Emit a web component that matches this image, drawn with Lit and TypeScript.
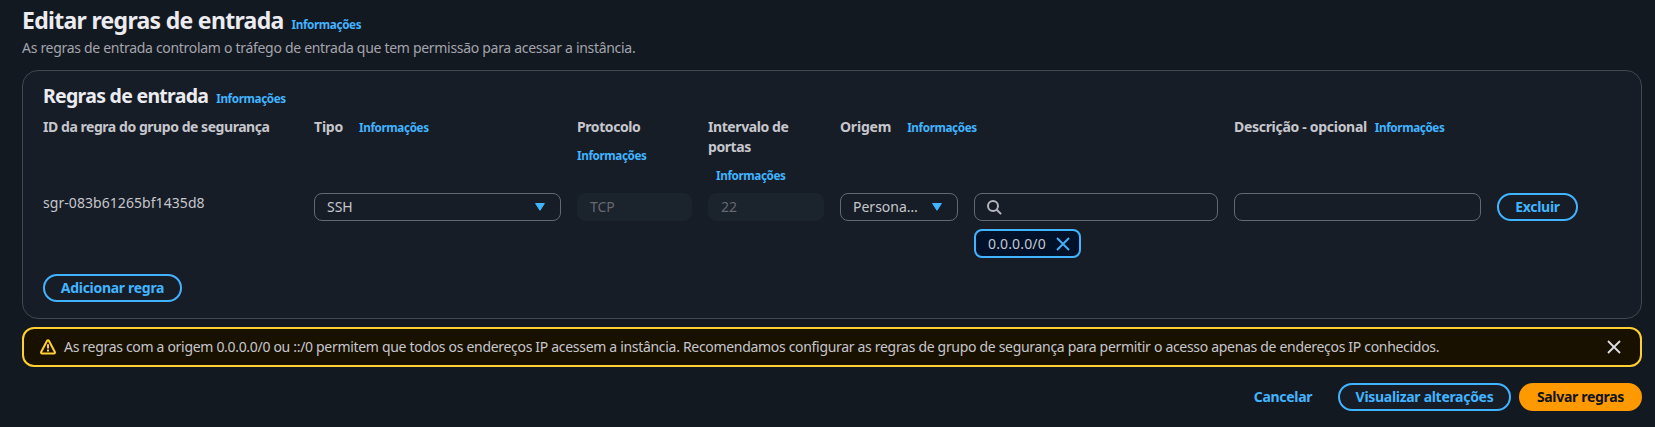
import { LitElement, html, css } from "lit";
import { customElement, property } from "lit/decorators.js";

@customElement("info-link")
class InfoLink extends LitElement {
  static styles = css`
    :host { display: inline-block; }
    a { font-size: 11.7px; line-height: 20px; font-weight: 700; letter-spacing: -0.38px; color: #42b4ff; white-space: nowrap; text-decoration: none; }
  `;
  render() { return html`<a>Informações</a>`; }
}

@customElement("pill-button")
class PillButton extends LitElement {
  @property({ reflect: true }) variant = "normal";
  static styles = css`
    :host { display: inline-block; }
    button { box-sizing: border-box; width: 100%; height: 28px; padding: 0; border: 2px solid #42b4ff; border-radius: 20px; background: #161d26; color: #42b4ff; font: 700 14px/20px "Noto Sans", sans-serif; letter-spacing: -0.3px; white-space: nowrap; display: flex; align-items: center; justify-content: center; }
    :host([variant="primary"]) button { background: #ff9900; border-color: #ff9900; color: #0f141a; }
    :host([variant="link"]) button { background: transparent; border-color: transparent; }
  `;
  render() { return html`<button><slot></slot></button>`; }
}

@customElement("app-root")
class AppRoot extends LitElement {
  static styles = css`
    :host { display: block; box-sizing: border-box; height: 427px; padding: 5px 13px 0 22px; background: #131920; color: #c6c6cd; font: 400 14px/20px "Noto Sans", sans-serif; overflow: hidden; }
    h1, h2, p { margin: 0; }
    .heading { display: flex; align-items: baseline; gap: 8px; white-space: nowrap; }
    h1 { font-size: 23px; line-height: 30px; color: #ebebf0; letter-spacing: -0.7px; }
    h2 { font-size: 19.5px; line-height: 24px; color: #ebebf0; letter-spacing: -0.72px; }
    .sub { margin-top: 3px; color: #a4a4ad; letter-spacing: -0.3px; }
    .panel { box-sizing: border-box; height: 249px; margin-top: 12px; padding: 13px 20px 0; border: 1px solid #424650; border-radius: 16px; background: #161d26; }
    .panel .heading { height: 25px; }
    .grid { display: grid; grid-template-columns: 255px 247px 115px 116px 118px 244px 247px 81px; column-gap: 16px; align-items: start; }
    .labels { margin-top: 8px; height: 68px; font-weight: 700; letter-spacing: -0.2px; }
    .label { display: flex; flex-wrap: wrap; column-gap: 16px; row-gap: 8px; align-items: baseline; }
    .label.tight { column-gap: 8px; letter-spacing: -0.3px; }
    .label.long { letter-spacing: -0.45px; }
    .label.stack { flex-direction: column; align-items: flex-start; letter-spacing: -0.42px; }
    .label.wide { grid-column: span 2; }
    .stack info-link { height: 20px; }
    .indent { margin-left: 8px; }
    .row { margin-top: 8px; height: 65px; }
    .id { letter-spacing: 0.06px; line-height: 20px; }
    .field { box-sizing: border-box; height: 28px; padding: 0 15px 0 12px; border: 1px solid #656871; border-radius: 8px; display: flex; align-items: center; justify-content: space-between; }
    .field.off { border-color: #1b232d; background: #1b232d; color: #656871; }
    .stackcell { display: flex; flex-direction: column; gap: 8px; align-items: flex-start; }
    .stackcell .field { width: 100%; }
    .token { box-sizing: border-box; width: 107px; height: 29px; padding: 0 9px 0 12px; border: 2px solid #42b4ff; border-radius: 8px; background: #001129; display: flex; align-items: center; justify-content: space-between; letter-spacing: 0.15px; }
    .add { margin-top: 16px; width: 139px; }
    .del { width: 81px; }
    svg { display: block; flex: none; }
    .alert { box-sizing: border-box; height: 40px; margin-top: 8px; padding: 0 19px 0 16px; border: 2px solid #ffcf33; border-radius: 12px; background: #191100; display: flex; align-items: center; }
    .alert p { flex: 1; margin-left: 8px; white-space: nowrap; letter-spacing: -0.31px; }
    .actions { margin-top: 16px; display: flex; justify-content: flex-end; }
    .cancel { width: 98px; margin-right: 6px; }
    .view { width: 173px; margin-right: 8px; }
    .save { width: 123px; }
  `;

  private caret() {
    return html`<svg width="10" height="8" viewBox="0 0 10 8"><path d="M.6.5h8.8L5 7.3z" fill="#42b4ff" stroke="#42b4ff" stroke-linejoin="round"/></svg>`;
  }

  private cross(color: string) {
    return html`<svg width="14" height="14" viewBox="0 0 14 14"><path d="M1 1l12 12M13 1L1 13" fill="none" stroke=${color} stroke-width="1.8"/></svg>`;
  }

  render() {
    return html`
      <div class="heading"><h1>Editar regras de entrada</h1><info-link></info-link></div>
      <p class="sub">As regras de entrada controlam o tráfego de entrada que tem permissão para acessar a instância.</p>
      <section class="panel">
        <div class="heading"><h2>Regras de entrada</h2><info-link></info-link></div>
        <div class="grid labels">
          <div class="label long"><span>ID da regra do grupo de segurança</span></div>
          <div class="label"><span>Tipo</span><info-link></info-link></div>
          <div class="label stack"><span>Protocolo</span><info-link></info-link></div>
          <div class="label stack"><span>Intervalo de<br>portas</span><info-link class="indent"></info-link></div>
          <div class="label wide"><span>Origem</span><info-link></info-link></div>
          <div class="label tight"><span>Descrição - opcional</span><info-link></info-link></div>
        </div>
        <div class="grid row">
          <div class="id">sgr-083b61265bf1435d8</div>
          <div class="field"><span>SSH</span>${this.caret()}</div>
          <div class="field off"><span>TCP</span></div>
          <div class="field off"><span>22</span></div>
          <div class="field"><span>Persona…</span>${this.caret()}</div>
          <div class="stackcell">
            <div class="field">
              <svg width="15" height="15" viewBox="0 0 15 15"><g fill="none" stroke="#b4b4bb" stroke-width="2"><circle cx="6" cy="6" r="5"/><path d="M9.5 9.5l4.6 4.6"/></g></svg>
            </div>
            <div class="token"><span>0.0.0.0/0</span>${this.cross("#42b4ff")}</div>
          </div>
          <div class="field"></div>
          <pill-button class="del">Excluir</pill-button>
        </div>
        <pill-button class="add">Adicionar regra</pill-button>
      </section>
      <div class="alert">
        <svg width="16" height="16" viewBox="0 0 16 16"><g fill="none" stroke="#ffcf33" stroke-width="2" stroke-linejoin="round"><path d="M7.1 1.7Q8 .6 8.9 1.7L15 13.2Q15 14.5 14 14.5H2Q1 14.5 1 13.2z"/><path d="M8 5.2v4.2M8 10.5v2"/></g></svg>
        <p>As regras com a origem 0.0.0.0/0 ou ::/0 permitem que todos os endereços IP acessem a instância. Recomendamos configurar as regras de grupo de segurança para permitir o acesso apenas de endereços IP conhecidos.</p>
        ${this.cross("#dedee3")}
      </div>
      <div class="actions">
        <pill-button class="cancel" variant="link">Cancelar</pill-button>
        <pill-button class="view">Visualizar alterações</pill-button>
        <pill-button class="save" variant="primary">Salvar regras</pill-button>
      </div>
    `;
  }
}
